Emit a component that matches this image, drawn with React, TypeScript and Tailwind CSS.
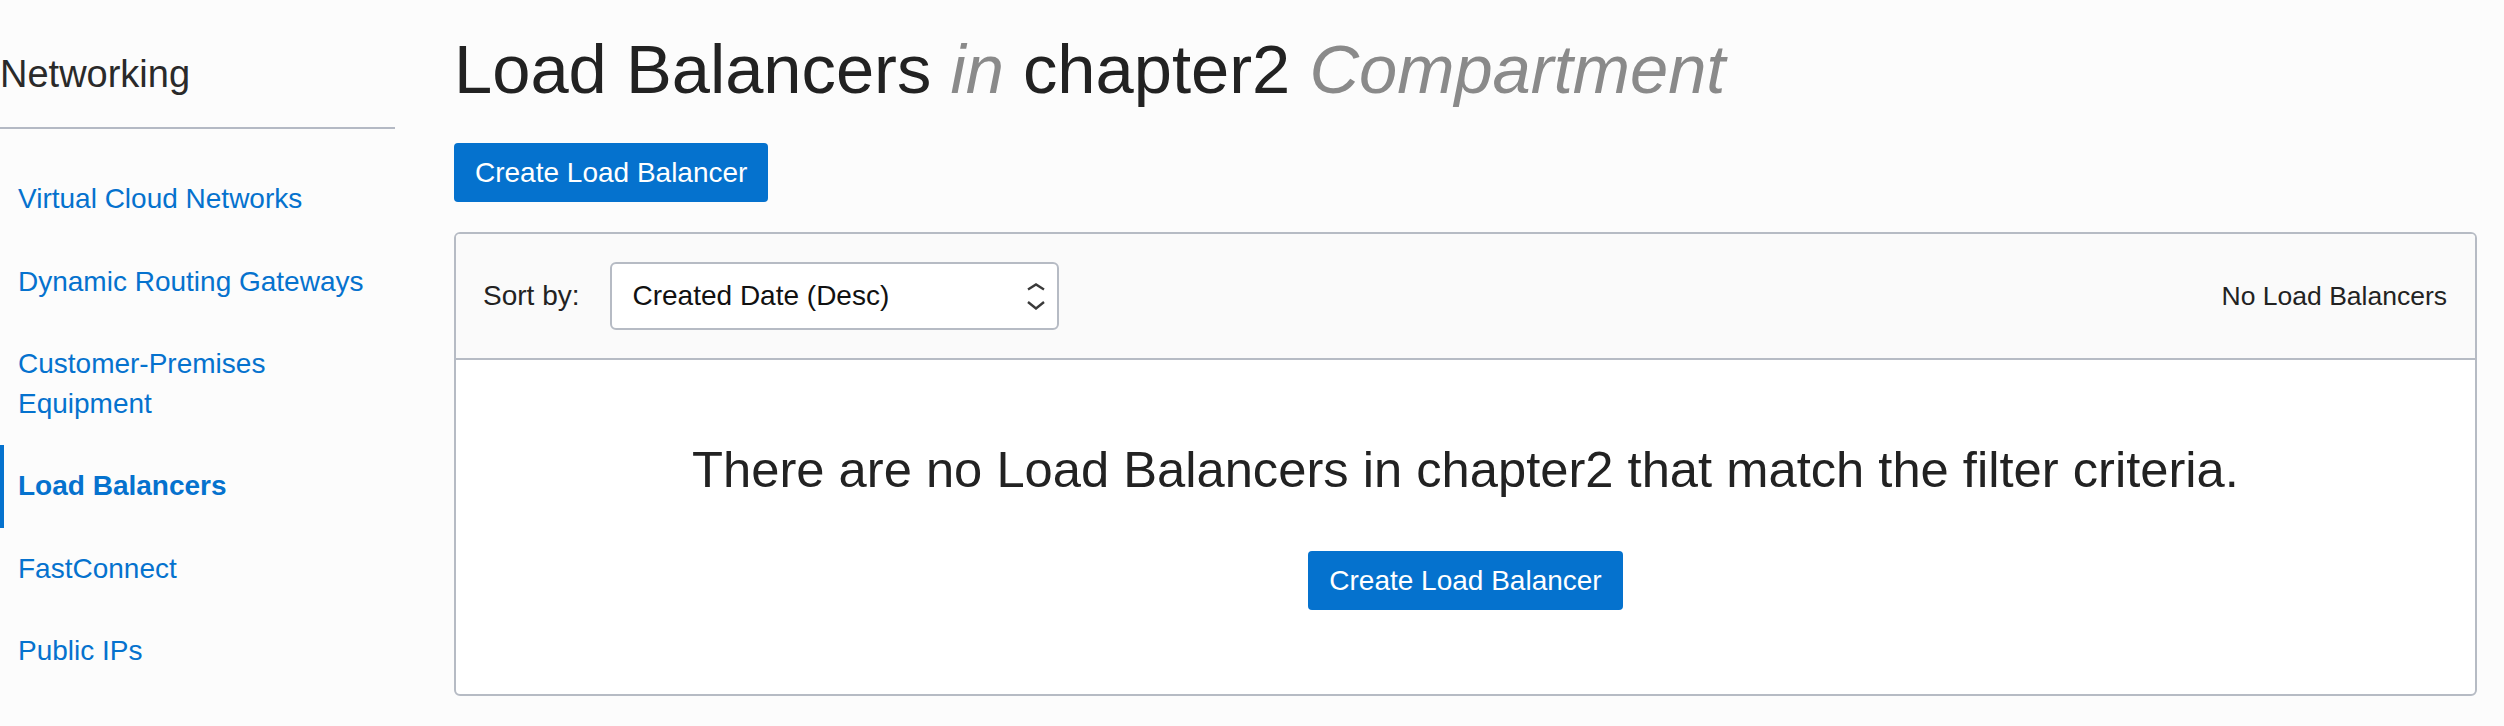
const navItems = [
  { label: "Virtual Cloud Networks" },
  { label: "Dynamic Routing Gateways" },
  { label: "Customer-Premises Equipment" },
  { label: "Load Balancers", active: true },
  { label: "FastConnect" },
  { label: "Public IPs" },
];

function CreateButton() {
  return (
    <button className="h-[59px] rounded-[4px] bg-[#0572ce] px-[21px] text-[28px] leading-[32px] text-white">
      Create Load Balancer
    </button>
  );
}

function SortSelect() {
  return (
    <div className="ml-[31px] flex h-[68px] w-[449px] items-center justify-between rounded-[6px] border-2 border-[#b6bbc4] bg-white pl-[20px] pr-[12px]">
      <span className="text-[28px] leading-[32px] text-[#111]">Created Date (Desc)</span>
      <svg width="18" height="28" viewBox="0 0 18 28" fill="none" stroke="#3a3a3a" strokeWidth="2.4">
        <path d="M1 7.5 L9 2.5 L17 7.5" />
        <path d="M1 20 L9 26.5 L17 20" />
      </svg>
    </div>
  );
}

export default function App() {
  return (
    <div className="flex min-h-screen bg-[#fcfcfc] font-['Liberation_Sans',Arial,sans-serif]">
      <aside className="w-[395px] shrink-0">
        <div className="border-b-2 border-[#b4b9c4] pb-[30px] pt-[51px]">
          <h2 className="text-[38px] leading-[46px] text-[#2a2a2a]">Networking</h2>
        </div>
        <ul className="pt-[29px]">
          {navItems.map((item) => (
            <li
              key={item.label}
              className={
                item.active
                  ? "border-l-4 border-[#0572ce] py-[21.2px] pl-[14px] pr-2 text-[28px] font-bold leading-[40px] text-[#0572ce]"
                  : "border-l-4 border-transparent py-[21.2px] pl-[14px] pr-2 text-[28px] leading-[40px] text-[#0572ce]"
              }
            >
              {item.label}
            </li>
          ))}
        </ul>
      </aside>

      <main className="ml-[59px] mr-[27px] flex-1">
        <h1 className="pt-[30px] text-[68.7px] leading-[80px] text-[#222]">
          Load Balancers <i className="text-[#8a8a8a]">in</i> chapter2{" "}
          <i className="text-[#8a8a8a]">Compartment</i>
        </h1>

        <div className="mt-[33px]">
          <CreateButton />
        </div>

        <section className="mt-[30px] overflow-hidden rounded-[6px] border-2 border-[#b6bbc4] bg-white">
          <div className="flex h-[126px] items-center border-b-2 border-[#b6bbc4] bg-[#fafafa] pl-[27px] pr-[28px]">
            <span className="text-[28px] leading-[32px] text-[#222]">Sort by:</span>
            <SortSelect />
            <span className="ml-auto text-[26.5px] leading-[30px] text-[#222]">No Load Balancers</span>
          </div>

          <div className="flex h-[334px] flex-col items-center pt-[80px]">
            <p className="text-[50.7px] leading-[60px] text-[#222]">
              There are no Load Balancers in chapter2 that match the filter criteria.
            </p>
            <div className="mt-[51px]">
              <CreateButton />
            </div>
          </div>
        </section>
      </main>
    </div>
  );
}
